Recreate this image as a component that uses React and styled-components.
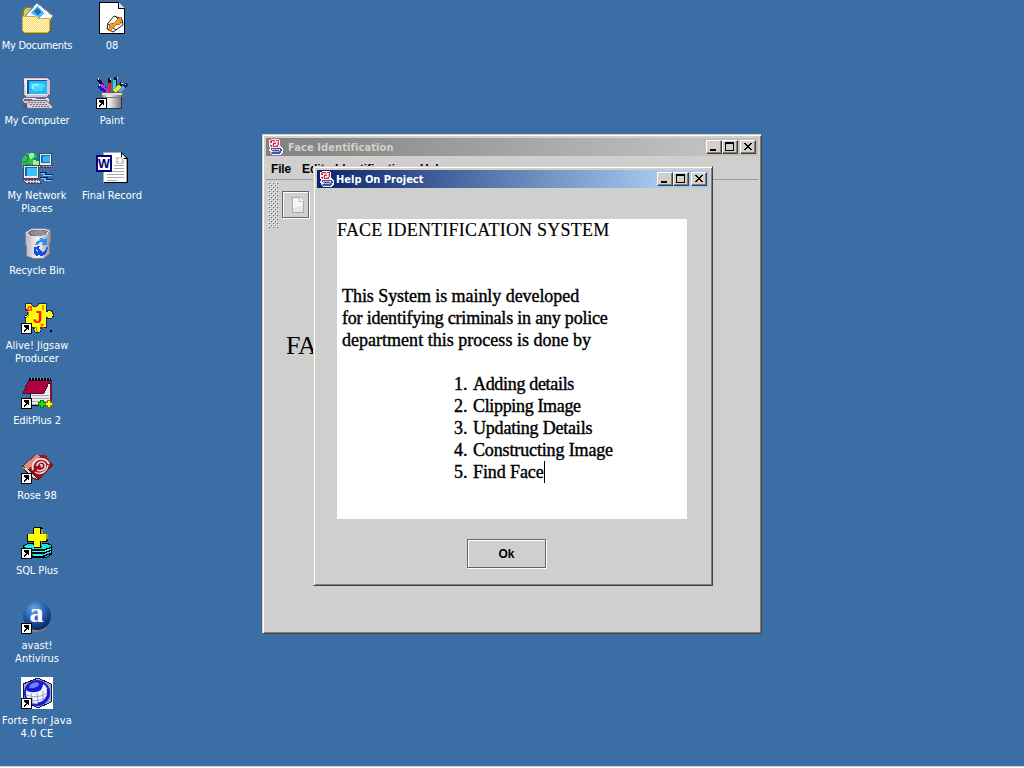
import React from 'react';
import styled, { createGlobalStyle } from 'styled-components';

const GlobalStyle = createGlobalStyle`
  html, body { margin: 0; padding: 0; overflow: hidden; }
  * { box-sizing: border-box; }
`;

const tahoma = `'DejaVu Sans Condensed', 'DejaVu Sans', sans-serif`;

const Screen = styled.div`
  display: flex;
  flex-direction: column;
  width: 1024px;
  height: 768px;
  overflow: hidden;
  background: #3a6ea5;
`;

const Desktop = styled.main`
  position: relative;
  display: flex;
  flex: 1;
  min-height: 0;
`;

const TaskbarEdge = styled.div`
  flex: none;
  height: 2px;
  background: #fff;
  border-top: 1px solid #d4d0c8;
`;

const IconColumn = styled.div`
  display: flex;
  flex-direction: column;
  width: 75px;
  padding-top: 2px;
`;

const Shortcut = styled.div`
  display: flex;
  flex-direction: column;
  align-items: center;
  gap: 5px;
  height: 75px;
  flex: none;
  width: 74px;
`;

const Glyph = styled.svg`
  display: block;
  flex: none;
  width: ${(p) => p.$size || 32}px;
  height: ${(p) => p.$size || 32}px;
  margin-left: ${(p) => p.$shift || 0}px;
  overflow: visible;
`;

const Label = styled.span`
  color: #fff;
  font: 11px/13px ${tahoma};
  font-stretch: condensed;
  letter-spacing: ${(p) => p.$track || 0}px;
  text-align: center;
  white-space: pre;
`;

const Frame = styled.section`
  position: absolute;
  display: flex;
  flex-direction: column;
  left: ${(p) => p.$x}px;
  top: ${(p) => p.$y}px;
  width: ${(p) => p.$w}px;
  height: ${(p) => p.$h}px;
  padding: 3px;
  background: #d4d0c8;
  border: 1px solid;
  border-color: #d4d0c8 #404040 #404040 #d4d0c8;
  box-shadow: inset 1px 1px #fff, inset -1px -1px #808080;
`;

const TitleBar = styled.header`
  display: flex;
  align-items: center;
  flex: none;
  height: 18px;
  padding: 0 2px;
  margin-bottom: 1px;
  background: ${(p) =>
    p.$active
      ? 'linear-gradient(90deg, #0a246a, #a6caf0 88%)'
      : 'linear-gradient(90deg, #808080, #c0c0c0 88%)'};
`;

const Title = styled.h1`
  flex: 1;
  margin: 0 0 0 ${(p) => p.$gap}px;
  padding-top: 2px;
  color: ${(p) => (p.$active ? '#fff' : '#d4d0c8')};
  font: bold 11px/16px ${tahoma};
  font-stretch: condensed;
  letter-spacing: ${(p) => p.$track}px;
  white-space: nowrap;
`;

const Controls = styled.div`
  display: flex;
`;

const ControlButton = styled.button`
  width: 16px;
  height: 14px;
  padding: 0;
  margin-left: ${(p) => (p.$apart ? 2 : 0)}px;
  background: #d4d0c8;
  border: 1px solid;
  border-color: #fff #404040 #404040 #fff;
  box-shadow: inset -1px -1px #808080;
`;

const ControlMark = styled.svg`
  display: block;
  width: 14px;
  height: 12px;
`;

const Client = styled.div`
  display: flex;
  flex-direction: column;
  flex: 1;
  min-height: 0;
  margin-bottom: ${(p) => (p.$inset ? 1 : 0)}px;
  background: #cfcfcf;
`;

const MenuBar = styled.nav`
  display: flex;
  height: 23px;
  padding-left: 5px;
  border-bottom: 1px solid #999;
`;

const MenuItem = styled.span`
  width: ${(p) => p.$w}px;
  font: bold 12px/24px 'Liberation Sans', sans-serif;
  letter-spacing: ${(p) => p.$track || 0}px;
  color: #000;
  white-space: nowrap;
`;

const ToolBar = styled.div`
  display: flex;
  align-items: flex-start;
  gap: 4px;
  height: 52px;
  padding: 2px 0 0 2px;
`;

const Grip = styled.div`
  width: 10px;
  height: 46px;
  background-image: radial-gradient(circle at 0.5px 0.5px, #fff 0.6px, transparent 0.7px),
    radial-gradient(circle at 1.5px 1.5px, #666 0.6px, transparent 0.7px),
    radial-gradient(circle at 2.5px 2.5px, #fff 0.6px, transparent 0.7px),
    radial-gradient(circle at 3.5px 3.5px, #666 0.6px, transparent 0.7px);
  background-size: 4px 4px;
`;

const MetalButton = styled.button`
  display: flex;
  align-items: center;
  justify-content: center;
  width: ${(p) => p.$w}px;
  height: ${(p) => p.$h}px;
  margin: ${(p) => p.$m || 0};
  padding: 1px 0 0;
  color: #000;
  background: #cfcfcf;
  border: 1px solid #666;
  box-shadow: 1px 1px #fff, inset 1px 1px #fff;
  font: bold 12px/18px 'Liberation Sans', sans-serif;
`;

const Banner = styled.div`
  padding: 99px 0 0 20px;
  font: 26px/30px 'Liberation Serif', serif;
  letter-spacing: -0.5px;
  color: #000;
`;

const HelpBody = styled.div`
  display: flex;
  flex-direction: column;
  align-items: flex-start;
  padding: 30px 0 0 20px;
`;

const HelpText = styled.article`
  width: 350px;
  height: 300px;
  background: #fff;
  color: #000;
  font: 18px/22px 'Liberation Serif', serif;
`;

const Heading = styled.p`
  margin: 0 0 44px;
  letter-spacing: 0.22px;
  -webkit-text-stroke: 0.15px #000;
`;

const Line = styled.p`
  margin: 0 0 0 ${(p) => p.$indent}px;
  letter-spacing: ${(p) => p.$track || 0}px;
  -webkit-text-stroke: 0.4px #000;
  white-space: pre;
`;

const Steps = styled.div`
  padding-top: 22px;
`;

const Step = styled(Line)`
  display: flex;
`;

const StepNumber = styled.span`
  width: 19px;
  letter-spacing: 0;
`;

const Caret = styled.span`
  width: 1px;
  height: 22px;
  background: #000;
`;

const Icon = ({ children }) => (
  <Glyph viewBox="0 0 32 32" shapeRendering="crispEdges">{children}</Glyph>
);

const LinkArrow = () => (
  <g>
    <rect x="0" y="21" width="11" height="11" fill="#000" />
    <rect x="1" y="22" width="9" height="9" fill="#fff" />
    <path d="M3 23h5v5h-1v-1h-1v1h-1v1h-1v1h-1v-2h1v-1h1v-1h-1v-1h-1z" fill="#000" />
  </g>
);

const Documents = () => (
  <Icon>
    <defs>
      <pattern id="manila" width="2" height="2" patternUnits="userSpaceOnUse">
        <rect width="2" height="2" fill="#fff8a8" />
        <path d="M0 0h1v1h-1zM1 1h1v1h-1z" fill="#ffd890" />
      </pattern>
    </defs>
    <path d="M2 8l2-3h7l2 3h14l2 3v19H3L1 28V12z" fill="#8c8418" />
    <path d="M3 9l2-3h5l2 3h15v20H3z" fill="#d5ca62" />
    <path d="M5 13L16 1l16 13-5 8-18-4z" fill="#f7ffff" stroke="#7b88bf" />
    <path d="M10 11l6-7 7 7-5 5z" fill="#52b9e9" />
    <path d="M13 10l3-4 4 4-3 3z" fill="#176ed0" />
    <path d="M1 14h13l2 2h12l1 13-2 1H3L1 28z" fill="url(#manila)" stroke="#c9b244" />
    <path d="M3 31h25l2-3V15" fill="none" stroke="#6f6620" />
  </Icon>
);

const Computer = () => (
  <Icon>
    <path d="M2 2l2-2h23l2 3v14l-3 3H5l-3-3z" fill="#c8c5d5" stroke="#5d5773" />
    <path d="M3 2h23v16H5z" fill="#efedf3" />
    <rect x="6" y="3" width="20" height="14" fill="#20509b" />
    <rect x="8" y="4" width="18" height="13" fill="#2ab7f2" />
    <path d="M10 6h12l2 3-3 5h-9l-3-4z" fill="#45d6ff" />
    <path d="M12 7h6v2h-5v3h-2V8z" fill="#8ef1ff" />
    <path d="M3 20h24l2 4-2 3H4l-3-3z" fill="#e2dfe9" stroke="#777086" />
    <path d="M3 22h8v1H3M15 21h10v1H15" fill="#6c6582" />
    <path d="M3 24l22-1 6 6v2H7l-5-4z" fill="#d2ccda" stroke="#706679" />
    <path d="M7 25h17M9 27h17M11 29h17" stroke="#777181" strokeDasharray="2 1" />
    <path d="M2 26h4v5H2z" fill="#5b556c" />
  </Icon>
);

const Network = () => (
  <Icon>
    <circle cx="11" cy="11" r="10.500" fill="#097da4" />
    <path d="M2 5l5-4 8 1 1 3-4 2 2 3-4 3-5-2-2 7-2-3V8z" fill="#37bd53" />
    <path d="M9 1h4v3l-3 3-3-2zM12 8l6 1 2 4-4 5-4-5z" fill="#9bf395" />
    <path d="M5 3l3 2-2 4-4 2" fill="none" stroke="#08714b" />
    <g stroke="#4b4560">
      <path d="M18.500 1.500h12v12h-12z" fill="#ece9ed" /><path d="M19 13.500h12v2H19z" fill="#ddd5df" />
      <path d="M2.500 13.500h15v13h-15z" fill="#ece9ed" /><path d="M2 27.500h16l2 3.500H5z" fill="#ddd5df" />
    </g>
    <rect x="20" y="3" width="9" height="8" fill="#126fc0" />
    <rect x="22" y="4" width="7" height="6" fill="#30b9ec" />
    <rect x="4" y="15" width="12" height="9" fill="#0f65b9" />
    <rect x="6" y="16" width="10" height="8" fill="#35c6f5" />
    <path d="M4 28h13M7 30h10M20 14h10" stroke="#686071" strokeDasharray="2 1" />
    <path d="M19 20h7l-2 2h8M19 25h8l-2 2h7" fill="none" stroke="#091b6e" />
    <path d="M20 21h4l-1 2h8M20 26h5l-1 2h7" fill="none" stroke="#80cfee" />
  </Icon>
);

const RecycleBin = () => (
  <Icon>
    <defs>
      <linearGradient id="bin"><stop stopColor="#b7b1c1" /><stop offset=".5" stopColor="#f8f7f4" /><stop offset="1" stopColor="#918896" /></linearGradient>
    </defs>
    <path d="M4 6l6-4 12-1 8 2-2 24-5 4-10 1-7-3z" fill="url(#bin)" stroke="#887d96" />
    <path d="M5 6l5-3 12-1 6 2-3 4-7 2-9-1z" fill="#77757e" stroke="#dfd9e6" />
    <path d="M9 6l7-3 9 1-2 4-6 1-6-1z" fill="#918f98" />
    <path d="M6 11v15l3 3M9 11v18" fill="none" stroke="#c5becf" strokeDasharray="1 1" />
    <path d="M14 18l2-4 4-3 4 1 2-1v7h-6l2-2-3-1-3 3z" fill="#2a8ff0" />
    <path d="M13 20l6-1-1 3 3 3 3-1 2-4 1 1-2 6-4 2-4-1-1 2-3-4z" fill="#1550dd" />
    <path d="M17 14l3-2M15 22l2 3" stroke="#67c9f4" />
  </Icon>
);

const Jigsaw = () => (
  <Icon>
    <path d="M4.500 1.500h6v1l2 2h3l2-2v-1h8v8l2-1h3l1.500 3v3l-1.500 2h-3l-2-1v10h-6l1 2-2 3h-4l-2-3 1-2H4.500v-9l-1-2 3-2v-4l-2-1z" fill="#ffff00" stroke="#172879" />
    <path d="M5 9l2 1v4l-2 2M13 25h2v3l2 2" fill="none" stroke="#9a7e00" />
    <g fill="#ff1515" fontFamily="Liberation Sans, sans-serif" shapeRendering="auto" fontWeight="bold">
      <text x="6" y="9" fontSize="9">α</text>
      <text x="21" y="8" fontSize="7">I</text>
      <text x="12" y="21" fontSize="17">J</text>
      <text x="19" y="26" fontSize="8">z</text>
    </g>
    <rect x="29" y="28" width="2" height="2" fill="#000" />
    <LinkArrow />
  </Icon>
);

const EditPlus = () => (
  <Icon>
    <defs><pattern id="cover" width="2" height="2" patternUnits="userSpaceOnUse"><rect width="2" height="2" fill="#d0002c" /><path d="M0 0h1v1H0zM1 1h1v1h-1z" fill="#8d0058" /></pattern></defs>
    <path d="M9.500 6.500h20v22h-20z" fill="#eee" stroke="#000" />
    <path d="M11 18h17M11 21h17M11 24h17M11 27h13" stroke="#aaa" />
    <path d="M29 3h2v25h-2z" fill="#870b2b" />
    <path d="M8 3h21l-6 13H2z" fill="url(#cover)" stroke="#4d1024" />
    <path d="M8 2h22" stroke="#000" strokeWidth="3" strokeDasharray="2 1" />
    <path d="M10 1h20" stroke="#aaa" strokeDasharray="1 2" />
    <path d="M19.500 23.500h3v2h2v3h-2v2h-3v-2h-2v-3h2z" fill="#14ed14" stroke="#067c0e" />
    <path d="M26.500 23.500h3v2h2v3h-2v2h-3v-2h-2v-3h2z" fill="#ffff20" stroke="#79770d" />
    <LinkArrow />
  </Icon>
);

const Rose = () => (
  <Icon>
    <path d="M1 14L14 3h10l8 10-14 15-9-1z" fill="#5e1620" />
    <path d="M2 14L15 3l5 1L7 17z" fill="#d78f77" />
    <path d="M2 15l5 2 9 10-5-2z" fill="#e9d1c6" />
    <path d="M20 3h5l6 10-13 14L8 17z" fill="#9d1020" />
    <g fill="none" stroke="#f0dedb" shapeRendering="auto">
      <path d="M12 18c-2-6 3-12 9-11 4 0 6 3 7 5" strokeWidth="2" />
      <path d="M16 14c0-4 6-6 8-2 2 5-4 8-8 6" strokeWidth="1.600" />
      <path d="M14 20c6 4 12-1 13-7M19 13c2-1 3 1 1 2" strokeWidth="1.500" />
    </g>
    <LinkArrow />
  </Icon>
);

const SqlPlus = () => (
  <Icon>
    <path d="M2 19l6-3h17l5 2 1 9-5 3-14 1-7-2z" fill="#13dddd" stroke="#000" />
    <path d="M3 21l7 2h13l8-3M5 25l7 1h11l8-3M9 29h14l8-3" fill="none" stroke="#000" strokeWidth="1.500" />
    <path d="M5 19h20M12 24h12l5-2M12 28h10" stroke="#3cffff" fill="none" />
    <path d="M12 1l2-1h7l1 2v5h5v6l-2 2h-4v5l-2 1h-6l-1-6H6V7h6z" fill="#000" />
    <path d="M20 2h2v5h-2zM25 7h2v5l-2 1zM20 14h1v5h-1z" fill="#a79908" />
    <path d="M13 1h6v6h6v7h-6v6h-6v-6H7V7h6z" fill="#ffff00" />
    <LinkArrow />
  </Icon>
);

const Avast = () => (
  <Icon>
    <defs><radialGradient id="ball" cx=".4" cy=".25" r=".8"><stop stopColor="#71a8e2" /><stop offset=".5" stopColor="#235fae" /><stop offset="1" stopColor="#071d58" /></radialGradient></defs>
    <path d="M10 26l15-2v3l-8 3h-7z" fill="#857c75" />
    <circle cx="16" cy="14" r="14" fill="url(#ball)" shapeRendering="auto" />
    <text x="8.500" y="20" fill="#fff" fontFamily="Liberation Serif, serif" fontSize="28" fontWeight="bold">a</text>
    <LinkArrow />
  </Icon>
);

const Forte = () => (
  <Icon>
    <rect width="32" height="32" fill="#fff" />
    <path d="M2 7L17 1l13 6v18l-13 6L2 24z" fill="#a7a8bd" stroke="#17184a" />
    <g shapeRendering="auto">
      <circle cx="16" cy="16" r="12" fill="#f1f3ff" stroke="#1b20db" strokeWidth="2" />
      <path d="M5 13C6 5 16 2 23 6l-3 7c-5 3-11 3-15 0z" fill="#1718d3" />
      <path d="M9 8c4-4 9-3 9-1 0 3-6 5-10 4" fill="#6f80f4" />
      <path d="M6 18c6 3 16 2 21-3M7 22c6 3 14 2 19-3M10 26c5 1 10 0 14-3M10 16l2 10M16 16l1 11M22 14v10" fill="none" stroke="#8a90c8" strokeWidth=".8" />
      <path d="M27 12c2 7-2 14-10 15" fill="none" stroke="#1719dc" strokeWidth="3" />
    </g>
    <LinkArrow />
  </Icon>
);

const MediaFile = () => (
  <Icon>
    <path d="M3.500.500h19l6 6v25h-25z" fill="#fff" stroke="#000" />
    <path d="M22.500.500v6h6" fill="#ddd" stroke="#000" />
    <path d="M18 14l8 3 1 6-10 7-6-3 1-6z" fill="#fff" stroke="#222" shapeRendering="auto" />
    <path d="M12 22l8 6M19 14l7 7" stroke="#222" shapeRendering="auto" />
    <path d="M26 15l-2 7-4 1-5 5-3 1 2-7 4-1 5-5z" fill="#ff971d" stroke="#a45617" strokeWidth=".7" />
  </Icon>
);

const Paint = () => (
  <Icon>
    <defs><linearGradient id="cup"><stop stopColor="#808080" /><stop offset=".35" stopColor="#f6f6f6" /><stop offset="1" stopColor="#666" /></linearGradient></defs>
    <g strokeWidth="3">
      <path d="M2 2l9 13" stroke="#090b39" /><path d="M5 7l6 8" stroke="#d22ae2" />
      <path d="M2 9l8 6" stroke="#1519c4" /><path d="M13 1v14" stroke="#111" /><path d="M13 6v9" stroke="#eb1d30" />
      <path d="M20 0l-2 15" stroke="#15172d" /><path d="M19 3l-1 12" stroke="#48c7e2" />
      <path d="M26 6l-8 9" stroke="#111" /><path d="M24 9l-6 6" stroke="#f3e51b" />
      <path d="M31 7l-8 8" stroke="#17205f" /><path d="M28 10l-5 5" stroke="#51a7cf" />
    </g>
    <path d="M2 1v2M3 7v2M14 1v2M21 0v2M25 6h2M29 7h1" stroke="#ddd" />
    <path d="M5 15h22v5l-2 1v10H8V20H5z" fill="url(#cup)" stroke="#666" />
    <path d="M6 16h20v2H6z" fill="#ddd" /><path d="M8 20.500h17" fill="none" stroke="#777" />
    <path d="M25.500 20v11.500H10" fill="none" stroke="#333" />
    <LinkArrow />
  </Icon>
);

const WordFile = () => (
  <Icon>
    <path d="M7.500.500h17l6 6v24h-23z" fill="#fff" stroke="#aaa" />
    <path d="M8 30.500h23.500v-24l-6-6v6h6" fill="none" stroke="#000" />
    <path d="M18 13.500h10M18 16.500h10M11 19.500h17M11 22.500h17M11 25.500h17M11 28.500h10" stroke="#aaa" />
    <path d="M20 5h8v7h-8z" fill="#ccc" /><path d="M22 8h4M24 6v5" stroke="#fff" strokeWidth="2" />
    <rect x="1" y="4" width="14" height="15" fill="#fff" stroke="#00007b" strokeWidth="2" />
    <text x="2" y="15.500" fill="#00007b" fontFamily="Liberation Sans, sans-serif" fontSize="12.500" fontWeight="bold">W</text>
  </Icon>
);

const JavaCup = () => (
  <Glyph $size={16} viewBox="0 0 16 16" shapeRendering="crispEdges">
    <path d="M1 1h2V0h7l2 1v6l3 3v3l-2 3H4l-2-2-1-4 1-1V8H1z" fill="#edf0ff" />
    <path d="M3 1h4v1H4v2H2V2h1zM8 1h3v5h-1V2H8zM5 4h3v1H6v2h3v1H5zM2 6h2v2H3zM9 6h1v2H9z" fill="#e52c3d" />
    <path d="M4 5h1v2H4zM7 6h2v1H7zM5 2h3v2H5zM9 3h1v3H9z" fill="#f8a6b2" />
    <path d="M3 9h9v1H4v1h7v1H4l-1-1zM12 9h1v1h1v2h-1v1h-2v-1h1zM3 13h10v1h-1v1H4v-1H3z" fill="#4a5599" />
    <path d="M5 10h6v1H5zM5 12h6v1H5z" fill="#aab4df" />
  </Glyph>
);

const WindowControls = () => (
  <Controls>
    <ControlButton aria-label="Minimize"><ControlMark viewBox="0 0 14 12"><rect x="3" y="8" width="6" height="2" /></ControlMark></ControlButton>
    <ControlButton aria-label="Maximize"><ControlMark viewBox="0 0 14 12"><path d="M2 1h9v9H2zM3 3v6h7V3z" fillRule="evenodd" /></ControlMark></ControlButton>
    <ControlButton $apart aria-label="Close"><ControlMark viewBox="0 0 14 12" shapeRendering="crispEdges"><path d="M3 2h2v1h1v1h2V3h1V2h2v1h-1v1H9v1H8v1h1v1h1v1h1v1H9V8H8V7H6v1H5v1H3V8h1V7h1V6h1V5H5V4H4V3H3z" /></ControlMark></ControlButton>
  </Controls>
);

const firstColumn = [
  [Documents, 'My Documents', -0.3],
  [Computer, 'My Computer', -0.15],
  [Network, 'My Network\nPlaces', 0],
  [RecycleBin, 'Recycle Bin', -0.15],
  [Jigsaw, 'Alive! Jigsaw\nProducer', 0],
  [EditPlus, 'EditPlus 2', -0.1],
  [Rose, 'Rose 98', 0],
  [SqlPlus, 'SQL Plus', -0.1],
  [Avast, 'avast!\nAntivirus', 0],
  [Forte, 'Forte For Java\n4.0 CE', 0.15],
];

const secondColumn = [
  [MediaFile, '08', 0],
  [Paint, 'Paint', 0],
  [WordFile, 'Final Record', 0],
];

const DesktopIcons = ({ items }) => (
  <IconColumn>
    {items.map(([Art, name, track]) => (
      <Shortcut key={name}><Art /><Label $track={track}>{name}</Label></Shortcut>
    ))}
  </IconColumn>
);

const intro = [
  ['This System is mainly developed', -0.06],
  ['for identifying criminals in any police', -0.2],
  ['department this process is done by', 0.02],
];

const steps = [
  ['Adding details', -0.32],
  ['Clipping Image', -0.34],
  ['Updating Details', -0.2],
  ['Constructing Image', -0.14],
  ['Find Face', -0.1],
];

export default function App() {
  return (
    <Screen>
      <GlobalStyle />
      <Desktop>
        <DesktopIcons items={firstColumn} />
        <DesktopIcons items={secondColumn} />

        <Frame $x={262} $y={134} $w={500} $h={500}>
          <TitleBar>
            <JavaCup />
            <Title $gap={4} $track={0.1}>Face Identification</Title>
            <WindowControls />
          </TitleBar>
          <Client>
            <MenuBar>
              <MenuItem $w={31} $track={-0.2}>File</MenuItem>
              <MenuItem $w={33}>Edit</MenuItem>
              <MenuItem $w={85}>Identification</MenuItem>
              <MenuItem $w={30}>Help</MenuItem>
            </MenuBar>
            <ToolBar>
              <Grip />
              <MetalButton $w={27} $h={27} $m="9px 0 0" aria-label="New">
                <Glyph $size={16} $shift={5} viewBox="0 0 16 16" shapeRendering="crispEdges">
                  <path d="M2.500.500h7l4 4v11h-11z" fill="#e6e6e6" stroke="#aaa" />
                  <path d="M3 1h6v4h4v3L3 11z" fill="#f6f6f6" />
                  <path d="M9.500.500v4h4" fill="#fff" stroke="#bbb" />
                </Glyph>
              </MetalButton>
            </ToolBar>
            <Banner>FACE</Banner>
          </Client>
        </Frame>

        <Frame $x={313} $y={166} $w={400} $h={420}>
          <TitleBar $active>
            <JavaCup />
            <Title $active $gap={1} $track={0}>Help On Project</Title>
            <WindowControls />
          </TitleBar>
          <Client $inset>
            <HelpBody>
              <HelpText>
                <Heading>FACE IDENTIFICATION SYSTEM</Heading>
                {intro.map(([text, track]) => (
                  <Line key={text} $indent={5} $track={track}>{text}</Line>
                ))}
                <Steps>
                  {steps.map(([text, track], i) => (
                    <Step key={text} $indent={117} $track={track}>
                      <StepNumber>{i + 1}.</StepNumber>{text}{i === 4 && <Caret />}
                    </Step>
                  ))}
                </Steps>
              </HelpText>
              <MetalButton $w={79} $h={29} $m="20px 0 0 130px">Ok</MetalButton>
            </HelpBody>
          </Client>
        </Frame>
      </Desktop>
      <TaskbarEdge />
    </Screen>
  );
}
